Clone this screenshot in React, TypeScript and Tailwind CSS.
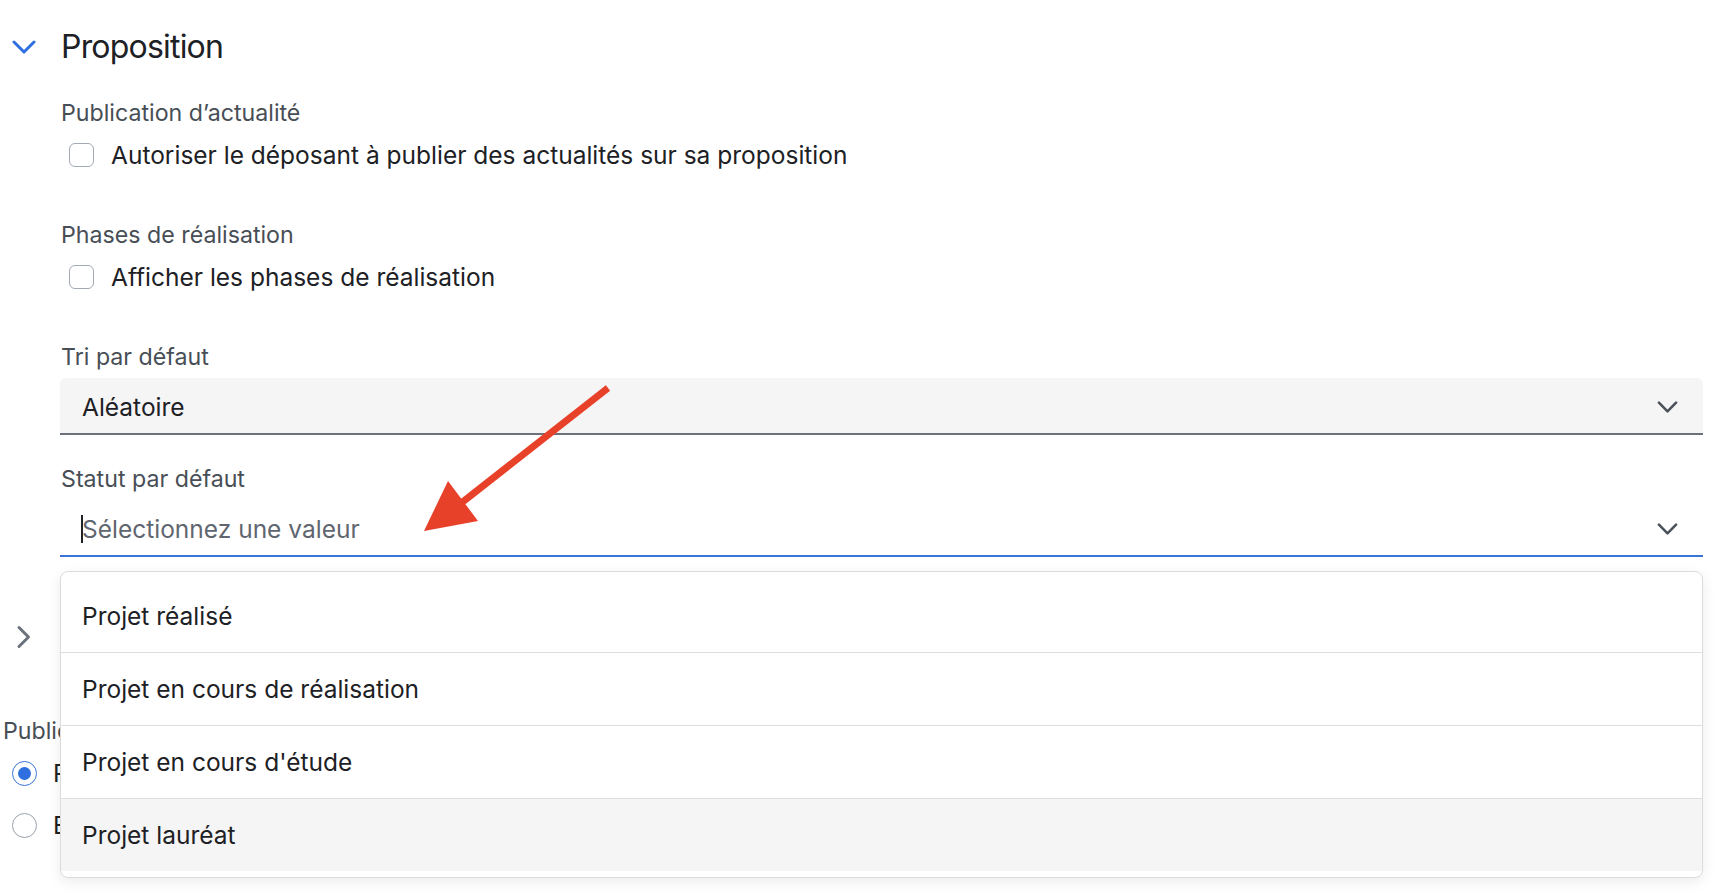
import React from "react";

function ChevronDown({ className, sw = 2.6 }: { className?: string; sw?: number }) {
  return (
    <svg viewBox="0 0 24 14" className={className} fill="none" stroke="currentColor" strokeWidth={sw} strokeLinecap="round" strokeLinejoin="round">
      <path d="M2 2l10 10L22 2" />
    </svg>
  );
}

function Checkbox({ label }: { label: string }) {
  return (
    <div className="flex items-center h-[32px] pl-[9px]">
      <span className="w-[25px] h-[24px] rounded-[6px] border-[1.5px] border-[#a3aab3] bg-white" />
      <span className="ml-[17px] text-[24.5px] leading-[32px] text-[#1d2125]">{label}</span>
    </div>
  );
}

function Label({ children, className = "" }: { children: React.ReactNode; className?: string }) {
  return <div className={`text-[23.2px] leading-[30px] text-[#474e56] ${className}`}>{children}</div>;
}

const options = [
  "Projet réalisé",
  "Projet en cours de réalisation",
  "Projet en cours d'étude",
  "Projet lauréat",
];

export default function App() {
  return (
    <div className="relative w-[1734px] h-[892px] overflow-hidden bg-white font-['Inter','Noto_Sans',sans-serif]">
      {/* Header */}
      <div className="flex items-center h-[94px]">
        <ChevronDown sw={3} className="ml-[12px] w-[24px] h-[14px] text-[#2f6fdf]" />
        <span className="ml-[25px] text-[32px] leading-[40px] text-[#1d2125] tracking-[-0.8px]">Proposition</span>
      </div>

      <div className="pl-[60px] pr-[31px]">
        <Label className="mt-[4px] pl-px">Publication d’actualité</Label>
        <div className="mt-[11px]">
          <Checkbox label="Autoriser le déposant à publier des actualités sur sa proposition" />
        </div>

        <Label className="mt-[49px] pl-px">Phases de réalisation</Label>
        <div className="mt-[11px]">
          <Checkbox label="Afficher les phases de réalisation" />
        </div>

        <Label className="mt-[49px] pl-px">Tri par défaut</Label>
        <div className="mt-[6px] flex items-start h-[57px] pt-[13px] pb-[10px] px-[22px] bg-[#f5f5f5] rounded-t-[6px] border-b-2 border-[#6b727c]">
          <span className="flex-1 text-[24.5px] leading-[32px] text-[#1d2125]">Aléatoire</span>
          <ChevronDown sw={3} className="mt-[10px] mr-[3px] w-[21px] h-[12px] text-[#4a5159]" />
        </div>

        <Label className="mt-[29px] pl-px">Statut par défaut</Label>
        <div className="mt-[6px] flex items-start h-[57px] pt-[13px] pb-[10px] pl-[22px] pr-[22px] bg-white border-b-2 border-[#3a74d9]">
          <span className="flex-1 flex items-center text-[24.5px] leading-[32px] text-[#5f6670]">
            <span className="inline-block w-[2px] h-[28px] bg-[#1f2328] -ml-px mr-[-1px]" />
            Sélectionnez une valeur
          </span>
          <ChevronDown sw={3} className="mt-[10px] mr-[3px] w-[21px] h-[12px] text-[#4a5159]" />
        </div>
      </div>

      {/* Next collapsed section (behind dropdown) */}
      <div className="mt-[56px] h-[48px] flex items-center pl-[16px]">
        <svg viewBox="0 0 14 24" className="w-[15px] h-[24px] text-[#6b727c]" fill="none" stroke="currentColor" strokeWidth={3} strokeLinecap="round" strokeLinejoin="round">
          <path d="M2.5 2.5l9.5 9.5L2.5 21.5" />
        </svg>
      </div>
      <div className="mt-[55px] pl-[3px]">
        <Label>Publication</Label>
        <div className="mt-[11px] flex items-center h-[32px] pl-[9px]">
          <span className="w-[25px] h-[25px] rounded-full border-[1.5px] border-[#3a74d9] flex items-center justify-center">
            <span className="w-[13px] h-[13px] rounded-full bg-[#2f6fdf]" />
          </span>
          <span className="ml-[16px] text-[24.5px] leading-[32px] text-[#1d2125]">Publiée</span>
        </div>
        <div className="mt-[20px] flex items-center h-[32px] pl-[9px]">
          <span className="w-[25px] h-[25px] rounded-full border-[1.5px] border-[#9aa1aa]" />
          <span className="ml-[16px] text-[24.5px] leading-[32px] text-[#1d2125]">En brouillon</span>
        </div>
      </div>

      {/* Dropdown overlay */}
      <div className="absolute left-[60px] top-[571px] w-[1643px] bg-white border border-[#dcdcdc] rounded-[8px] shadow-[0_4px_14px_rgba(0,0,0,0.08)] pt-[8px] pb-[6px]">
        {options.map((o, i) => (
          <div
            key={o}
            className={`h-[72px] flex items-center pl-[21px] text-[24.5px] leading-[32px] text-[#1d2125] ${i > 0 ? "border-t border-[#dedede] h-[73px]" : ""} ${i === 3 ? "bg-[#f5f5f5]" : ""}`}
          >
            {o}
          </div>
        ))}
      </div>

      {/* Annotation arrow */}
      <svg className="absolute left-0 top-0 pointer-events-none" width="1734" height="892" viewBox="0 0 1734 892">
        <line x1="608" y1="388" x2="460" y2="504" stroke="#e8412a" strokeWidth="7" />
        <polygon points="424,531 448,481 478,521" fill="#e8412a" />
      </svg>
    </div>
  );
}
